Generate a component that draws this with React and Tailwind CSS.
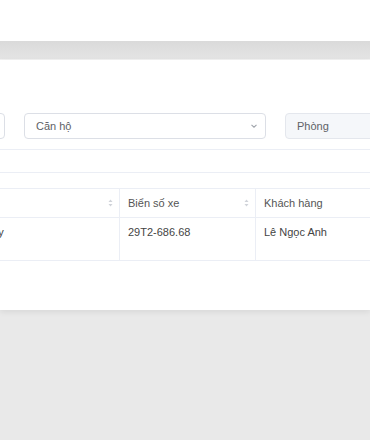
import React from "react";

const SortIcon = () => (
  <svg width="7" height="10" viewBox="0 0 7 10" className="shrink-0">
    <path d="M3.5 1.5 L5.5 4 L1.5 4 Z" fill="#d0d3d9" />
    <path d="M3.5 8.5 L5.5 6 L1.5 6 Z" fill="#d0d3d9" />
  </svg>
);

const App = () => {
  return (
    <div
      className="w-[370px] h-[440px] overflow-hidden bg-[#e9e9e9] flex flex-col"
      style={{ fontFamily: '"Liberation Sans", Arial, sans-serif' }}
    >
      <div className="h-[41px] bg-white shrink-0" />
      <div className="h-[19px] shrink-0 bg-gradient-to-b from-[#dadada] to-[#e4e4e4] border-b border-[#f2f2f2]" />

      <div className="h-[250px] shrink-0 bg-white shadow-[0_2px_6px_rgba(0,0,0,0.08)] relative z-10 pt-[53px]">
        {/* filters */}
        <div className="flex items-center gap-[19px] -ml-[95px] w-[560px]">
          <div className="w-[100px] h-[26px] rounded border border-[#dcdfe6] bg-white" />
          <div className="w-[242px] h-[26px] rounded border border-[#dcdfe6] bg-white flex items-center justify-between pl-[11px] pr-[7px]">
            <span className="text-[11px] text-[#606266]">Căn hộ</span>
            <svg width="8" height="6" viewBox="0 0 8 6">
              <path d="M1.5 1.8 L4 4.2 L6.5 1.8" stroke="#a0a4ab" strokeWidth="1.1" fill="none" />
            </svg>
          </div>
          <div className="w-[160px] h-[26px] rounded border border-[#e4e7ed] bg-[#f5f7fa] flex items-center pl-[11px]">
            <span className="text-[11px] text-[#606266]">Phòng</span>
          </div>
        </div>

        <div className="mt-[10px] h-[24px] border-t border-b border-[#ebeef5]" />

        {/* table */}
        <div className="mt-[15px] border-t border-[#ebeef5]">
          <div className="flex h-[29px] border-b border-[#ebeef5] text-[11px] text-[#555]">
            <div className="w-[120px] border-r border-[#ebeef5] flex items-center justify-end pr-[5px]">
              <SortIcon />
            </div>
            <div className="w-[136px] border-r border-[#ebeef5] flex items-center justify-between pl-[8px] pr-[5px]">
              <span>Biển số xe</span>
              <SortIcon />
            </div>
            <div className="flex-1 flex items-center pl-[8px]">
              <span>Khách hàng</span>
            </div>
          </div>
          <div className="flex h-[43px] border-b border-[#ebeef5] text-[11px] text-[#444]">
            <div className="w-[120px] border-r border-[#ebeef5] pt-[6px] overflow-hidden whitespace-nowrap">
              <span className="inline-block -ml-[64px]">Đinh Văn Huy</span>
            </div>
            <div className="w-[136px] border-r border-[#ebeef5] pl-[8px] pt-[6px]">
              29T2-686.68
            </div>
            <div className="flex-1 pl-[8px] pt-[6px]">Lê Ngọc Anh</div>
          </div>
        </div>
      </div>

      <div className="flex-1 bg-[#e9e9e9]" />
    </div>
  );
};

export default App;
